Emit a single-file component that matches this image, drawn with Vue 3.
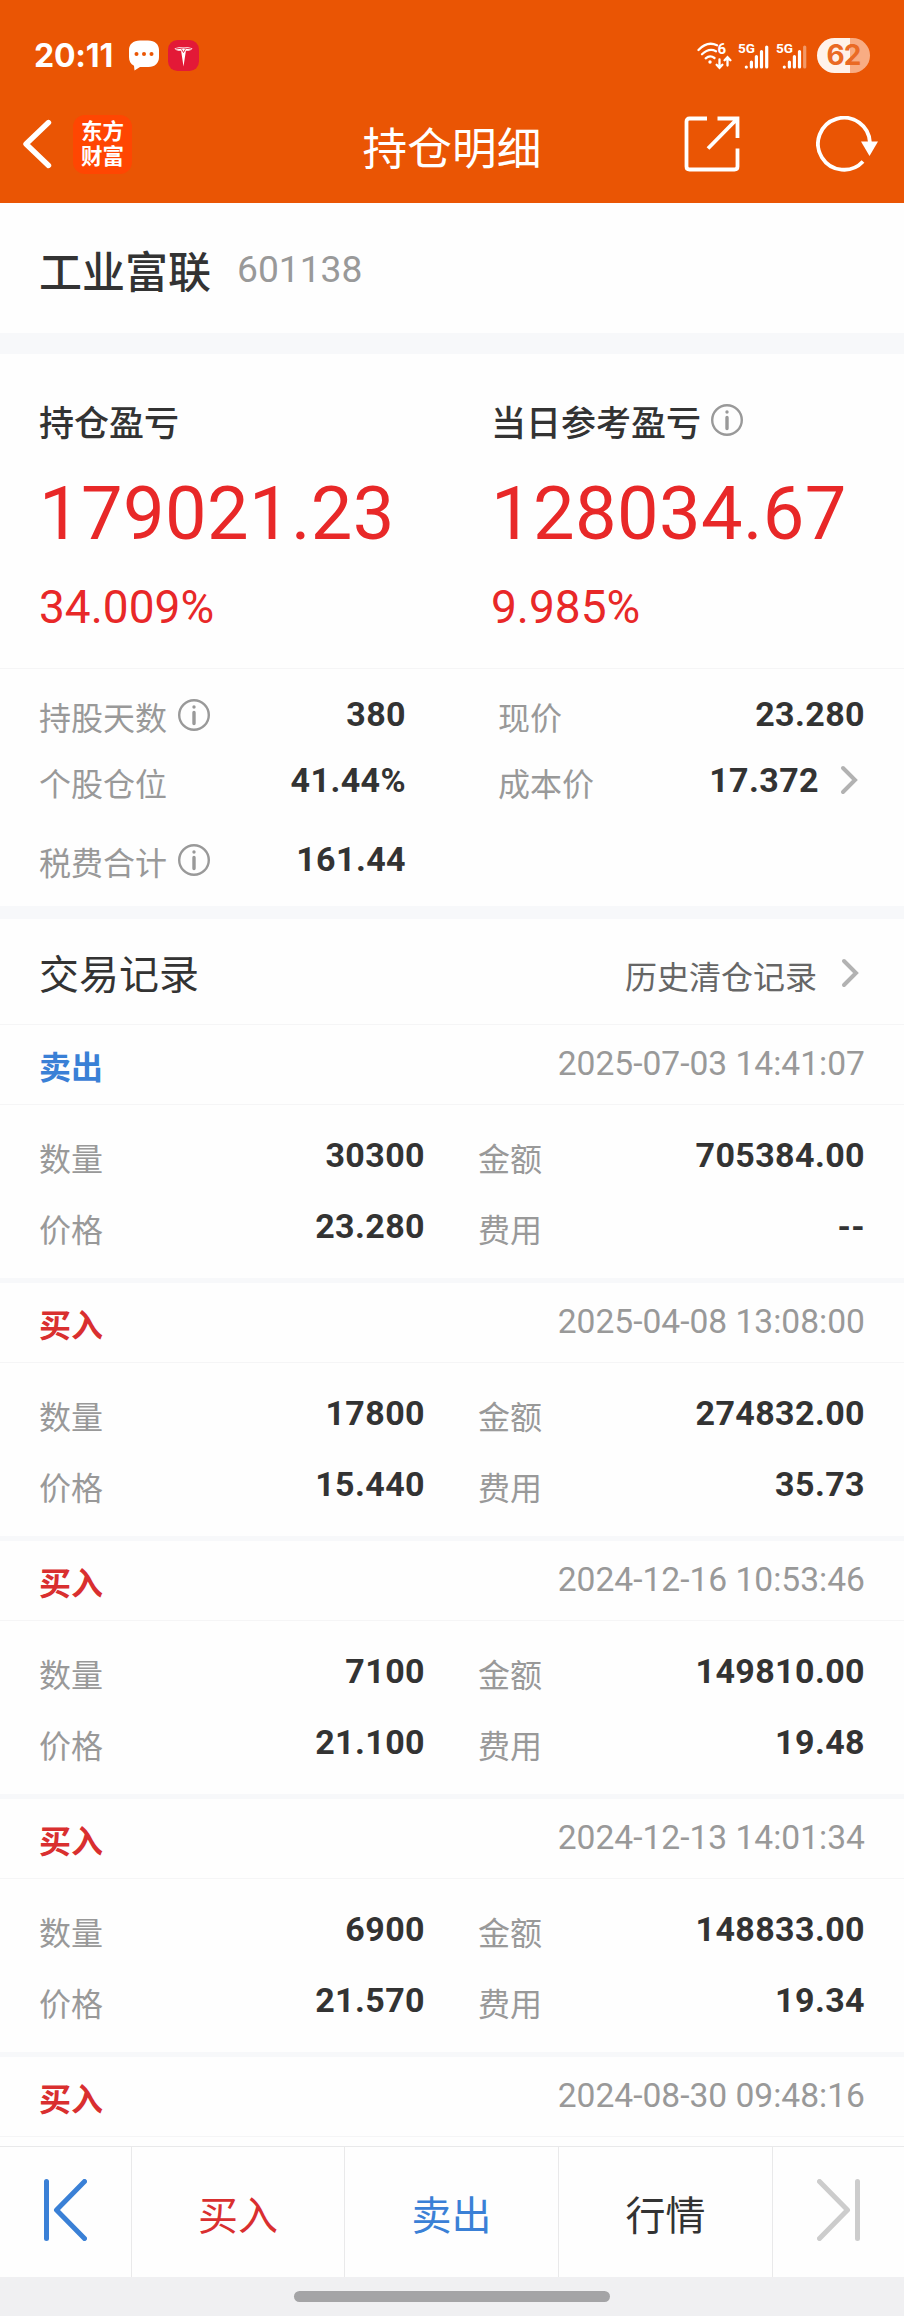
<script setup>
import { ref, computed } from 'vue';

const stock = { name: '工业富联', code: '601138' };

const summary = [
  { label: '持仓盈亏', amount: '179021.23', rate: '34.009%', info: false },
  { label: '当日参考盈亏', amount: '128034.67', rate: '9.985%', info: true },
];

const details = [
  { label: '持股天数', value: '380', info: true },
  { label: '现价', value: '23.280' },
  { label: '个股仓位', value: '41.44%' },
  { label: '成本价', value: '17.372', link: true },
  { label: '税费合计', value: '161.44', info: true },
];

const trades = ref([
  { side: 'sell', time: '2025-07-03 14:41:07', qty: '30300', amount: '705384.00', price: '23.280', fee: '--' },
  { side: 'buy', time: '2025-04-08 13:08:00', qty: '17800', amount: '274832.00', price: '15.440', fee: '35.73' },
  { side: 'buy', time: '2024-12-16 10:53:46', qty: '7100', amount: '149810.00', price: '21.100', fee: '19.48' },
  { side: 'buy', time: '2024-12-13 14:01:34', qty: '6900', amount: '148833.00', price: '21.570', fee: '19.34' },
  { side: 'buy', time: '2024-08-30 09:48:16' },
]);

const sideText = { buy: '买入', sell: '卖出' };

const records = computed(() =>
  trades.value.map(t => ({
    ...t,
    fields: t.qty
      ? [
          { label: '数量', value: t.qty },
          { label: '金额', value: t.amount },
          { label: '价格', value: t.price },
          { label: '费用', value: t.fee },
        ]
      : [],
  }))
);
</script>

<template>
  <div class="page">
    <header class="top">
      <div class="status-bar">
        <span class="clock">20:11</span>
        <svg class="chat-icon" width="30" height="31" viewBox="0 0 30 31">
          <path d="M11 0.5h8c7 0 11 4 11 9.500v7c0 6-4 10-10.500 10H11L5.500 30.500 5 25.700C1.600 24 0 21 0 17v-7C0 4.500 4 0.500 11 0.500z" fill="#fff" />
          <g fill="#ea5504">
            <circle cx="7.500" cy="14" r="2" />
            <circle cx="15" cy="14" r="2" />
            <circle cx="22.500" cy="14" r="2" />
          </g>
        </svg>
        <svg class="tesla-icon" width="31" height="31" viewBox="0 0 31 31">
          <rect width="31" height="31" rx="9.500" fill="#e31937" />
          <path d="M6.500 8.300Q15.500 5.600 24.500 8.300Q23.800 10.600 20.600 10.700L17.900 10.700L15.500 26.500L13.100 10.700L10.400 10.700Q7.200 10.600 6.500 8.300z" fill="#fff" />
          <path d="M7.500 9Q15.500 6.900 23.500 9M13.600 9.200L15.500 12.500L17.400 9.200" fill="none" stroke="#e31937" stroke-width="0.900" />
        </svg>

        <svg class="wifi-icon" width="35" height="36" viewBox="0 -4 35 36">
          <g fill="none" stroke="#fff" stroke-width="2.300" stroke-linecap="round">
            <path d="M1.500 8Q10 -1.200 20 3.200" />
            <path d="M5 12.300Q12 5.500 19 9.200" />
            <path d="M8.700 16.300Q13 12.500 17.500 16" />
            <path d="M22.500 17.500v8M19.600 22.800l2.900 3 2.900-3" />
            <path d="M30.500 23.500v-8M27.600 18.200l2.900-3 2.900 3" />
          </g>
          <circle cx="13" cy="20" r="1.700" fill="#fff" />
          <text x="20.500" y="12" class="wifi-num">6</text>
        </svg>
        <svg v-for="n in 2" :key="n" class="signal-icon" width="31" height="36" viewBox="0 -4 31 36">
          <text x="0" y="11" class="net-text">5G</text>
          <g stroke="#fff" stroke-width="3.200" stroke-linecap="round">
            <path d="M8.300 25v.1M13.400 20v5M18.400 14.500V25M23.500 9.500V25" />
            <path d="M28.700 5V25" :opacity="n === 2 ? 0.4 : 1" />
          </g>
        </svg>
        <span class="battery">62</span>
      </div>

      <nav class="nav-bar">
        <div class="nav-left">
          <svg width="30" height="50" viewBox="0 0 30 50">
            <path d="M26.500 3.500L4 25L26.500 46.500" fill="none" stroke="#fff" stroke-width="5.400" stroke-linecap="round" stroke-linejoin="round" />
          </svg>
          <span class="logo">东方<br />财富</span>
        </div>
        <h1 class="nav-title">持仓明细</h1>
        <div class="nav-right">
          <svg width="56" height="56" viewBox="0 0 56 56" fill="none" stroke="#fff" stroke-width="3.800">
            <path d="M23 2.500H5.500Q2.500 2.500 2.500 5.500V50.500Q2.500 53.500 5.500 53.500H50.500Q53.500 53.500 53.500 50.500V32.500" />
            <path d="M33.500 2.500H53.500V22M53 3L24 32.500" />
          </svg>
          <svg width="62" height="56" viewBox="0 0 62 56">
            <path d="M54 27A26 26 0 1 0 47 45.500" fill="none" stroke="#fff" stroke-width="3.800" />
            <path d="M45 25.500H62L53.500 40z" fill="#fff" />
          </svg>
        </div>
      </nav>
    </header>

    <section class="stock">
      <span class="stock-name">{{ stock.name }}</span>
      <span class="stock-code">{{ stock.code }}</span>
    </section>

    <section class="summary">
      <div v-for="item in summary" :key="item.label" class="summary-item">
        <div class="summary-label">
          <span>{{ item.label }}</span>
          <svg v-if="item.info" class="info-icon" width="32" height="32" viewBox="0 0 32 32">
            <circle cx="16" cy="16" r="14.800" />
            <path d="M16 13.500v11M16 8v.1" />
          </svg>
        </div>
        <div class="summary-amount">{{ item.amount }}</div>
        <div class="summary-rate">{{ item.rate }}</div>
      </div>
    </section>

    <section class="details">
      <div v-for="item in details" :key="item.label" class="field">
        <span class="field-label">{{ item.label }}</span>
        <svg v-if="item.info" class="info-icon" width="32" height="32" viewBox="0 0 32 32">
          <circle cx="16" cy="16" r="14.800" />
          <path d="M16 13.500v11M16 8v.1" />
        </svg>
        <span class="field-value">{{ item.value }}</span>
        <svg v-if="item.link" class="arrow" width="18" height="30" viewBox="0 0 18 30">
          <path d="M3 3L15 15L3 27" />
        </svg>
      </div>
    </section>

    <section class="trades">
      <div class="trades-head">
        <h2>交易记录</h2>
        <span class="history">历史清仓记录</span>
        <svg class="arrow" width="18" height="30" viewBox="0 0 18 30">
          <path d="M3 3L15 15L3 27" />
        </svg>
      </div>

      <article v-for="item in records" :key="item.time" class="record">
        <div class="record-head">
          <span class="side" :class="item.side">{{ sideText[item.side] }}</span>
          <time>{{ item.time }}</time>
        </div>
        <div v-if="item.fields.length" class="record-body">
          <div v-for="f in item.fields" :key="f.label" class="field">
            <span class="field-label">{{ f.label }}</span>
            <span class="field-value">{{ f.value }}</span>
          </div>
        </div>
      </article>
    </section>

    <footer class="tab-bar">
      <button type="button" class="tab prev">
        <svg width="43" height="62" viewBox="0 0 43 62">
          <path d="M2.500 2.500V59.500M40.500 2.500L12.500 31L40.500 59.500" />
        </svg>
      </button>
      <button type="button" class="tab buy">买入</button>
      <button type="button" class="tab sell">卖出</button>
      <button type="button" class="tab">行情</button>
      <button type="button" class="tab next">
        <svg width="43" height="62" viewBox="0 0 43 62">
          <path d="M40.500 2.500V59.500M2.500 2.500L30.500 31L2.500 59.500" />
        </svg>
      </button>
    </footer>
    <div class="home-area"><span class="home-pill"></span></div>
  </div>
</template>

<style>
body {
  margin: 0;
  background: #fff;
}
</style>

<style scoped>
.page {
  display: flex;
  flex-direction: column;
  width: 904px;
  height: 2316px;
  overflow: hidden;
  background: #fefefe;
  color: #333;
  font-family: "Noto Sans CJK SC", sans-serif;
}

.top {
  flex-shrink: 0;
  height: 203px;
  background: #ea5504;
  color: #fff;
}

/* status bar */
.status-bar {
  display: flex;
  align-items: center;
  box-sizing: border-box;
  height: 85px;
  padding: 26px 34px 0;
}

.clock {
  width: 95px;
  font: 700 32px/36px Inter, sans-serif;
  letter-spacing: -0.2px;
}

.tesla-icon {
  margin-left: 9px;
}

.wifi-icon {
  margin-left: auto;
  margin-right: 6px;
}

.wifi-num {
  font: 700 15px Roboto, sans-serif;
  fill: #fff;
}

.signal-icon {
  margin-right: 7px;
}

.net-text {
  font: 700 13.500px Roboto, sans-serif;
  fill: #fff;
}

.battery {
  width: 53px;
  margin-left: 3px;
  border-radius: 18px;
  background: linear-gradient(90deg, #fff2ea 62%, #f8ac83 62%);
  color: #ea6a24;
  font: 700 28px/35px Inter, sans-serif;
  letter-spacing: -1px;
  text-align: center;
}

/* nav bar */
.nav-bar {
  display: grid;
  grid-template-columns: 1fr auto 1fr;
  align-items: center;
  height: 118px;
  padding: 0 22px;
}

.nav-left,
.nav-right {
  display: flex;
  align-items: center;
}

.nav-left {
  gap: 21px;
}

.nav-right {
  justify-content: flex-end;
  gap: 76px;
  padding-right: 4px;
}

.logo {
  box-sizing: border-box;
  width: 59px;
  height: 59px;
  padding-top: 2px;
  border-radius: 12px;
  background: #ff4602;
  font-size: 21.5px;
  font-weight: 700;
  line-height: 25px;
  text-align: center;
}

.nav-title {
  margin: 0;
  padding-top: 3px;
  font-size: 44.700px;
  font-weight: 400;
  line-height: 60px;
}

/* stock */
.stock {
  display: flex;
  align-items: center;
  flex-shrink: 0;
  height: 130px;
  padding: 0 40px 0 39px;
  border-bottom: 21px solid #f7f8fa;
}

.stock-name {
  padding-top: 1px;
  font-size: 43px;
  font-weight: 500;
  line-height: 60px;
}

.stock-code {
  padding-top: 2px;
  margin-left: 26px;
  color: #999;
  font: 400 37.200px/60px Roboto, sans-serif;
}

/* profit summary */
.summary {
  display: grid;
  grid-template-columns: 452px 1fr;
  flex-shrink: 0;
  box-sizing: border-box;
  height: 315px;
  padding: 40px 40px 0 39px;
  border-bottom: 1px solid #f5f5f6;
}

.summary-label {
  display: flex;
  align-items: center;
  gap: 10px;
  height: 52px;
  font-size: 35px;
  font-weight: 500;
  line-height: 50px;
}

.summary-label span {
  padding-top: 2px;
}

.summary-amount,
.summary-rate {
  color: #e82828;
  font-family: Roboto, sans-serif;
}

.summary-amount {
  padding-top: 1px;
  font-size: 74px;
  line-height: 133px;
  letter-spacing: 0.4px;
}

.summary-rate {
  font-size: 46px;
  line-height: 54px;
}

.info-icon {
  fill: none;
  stroke: #999;
  stroke-width: 2.4;
  stroke-linecap: round;
}

.info-icon path {
  stroke-width: 3.4;
}

/* label / value pairs */
.field {
  display: flex;
  align-items: center;
}

.field-label {
  padding-top: 1px;
  color: #999;
  font-size: 32px;
  line-height: 46px;
}

.field .info-icon {
  margin-left: 11px;
}

.field-value {
  padding-bottom: 2px;
  margin-left: auto;
  font: 700 34px/46px Roboto, sans-serif;
  letter-spacing: 0.4px;
}

.arrow {
  flex-shrink: 0;
  fill: none;
  stroke: #b2b2b2;
  stroke-width: 4;
  stroke-linecap: round;
}

.field .arrow {
  margin: 0 7px 2px 21px;
}

.details {
  display: grid;
  grid-template-columns: 367px 367px;
  grid-template-rows: 66px 66px 92px;
  justify-content: space-between;
  flex-shrink: 0;
  box-sizing: border-box;
  height: 250px;
  padding: 13px 39px 0;
  border-bottom: 13px solid #f7f8fa;
}

/* trade records */
.trades {
  flex: 1;
  min-height: 0;
  overflow: hidden;
}

.trades-head {
  display: flex;
  align-items: center;
  box-sizing: border-box;
  height: 106px;
  padding: 0 45px 0 39px;
  border-bottom: 1px solid #f5f5f6;
}

.trades-head h2 {
  margin: 0;
  font-size: 40px;
  font-weight: 400;
  line-height: 60px;
}

.history {
  margin-left: auto;
  padding-top: 6px;
  color: #666;
  font-size: 32px;
}

.trades-head .arrow {
  margin: 2px 0 0 24px;
}

.record-head {
  display: flex;
  align-items: center;
  justify-content: space-between;
  height: 79px;
  padding: 0 39px;
  border-bottom: 1px solid #f5f5f6;
}

.side {
  font-size: 32px;
  font-weight: 700;
}

.record-head time {
  padding-bottom: 2px;
  color: #999;
  font: 400 33.600px/46px Roboto, sans-serif;
}

.record-body {
  display: grid;
  grid-template-columns: 386px 387px;
  grid-template-rows: 71px 71px;
  justify-content: space-between;
  box-sizing: border-box;
  height: 178px;
  padding: 15px 39px 0;
  border-bottom: 5px solid #f7f8fa;
}

.record-body .field-label {
  padding-top: 3px;
}

.buy {
  color: #d92f2f;
}

.sell {
  color: #3a80d6;
}

/* bottom bar */
.tab-bar {
  display: grid;
  grid-template-columns: 132px 213px 214px 214px 131px;
  flex-shrink: 0;
  height: 130px;
  border-top: 1px solid #e9e9ea;
}

.tab {
  display: flex;
  align-items: center;
  justify-content: center;
  padding: 2px 0 0;
  border: none;
  border-right: 1px solid #e9e9ea;
  background: none;
  font-family: inherit;
  font-size: 40px;
}

.tab:not(.buy):not(.sell) {
  color: #333;
}

.tab:last-child {
  border-right: none;
}

.tab svg {
  margin-bottom: 6px;
  fill: none;
  stroke-width: 5;
  stroke-linecap: round;
  stroke-linejoin: round;
}

.prev svg {
  stroke: #3a80d6;
}

.next svg {
  stroke: #ccc;
}

.home-area {
  display: flex;
  justify-content: center;
  flex-shrink: 0;
  box-sizing: border-box;
  height: 39px;
  padding-top: 14px;
  background: #f0f0f2;
}

.home-pill {
  width: 316px;
  height: 11px;
  border-radius: 6px;
  background: #a4a4a6;
}
</style>
